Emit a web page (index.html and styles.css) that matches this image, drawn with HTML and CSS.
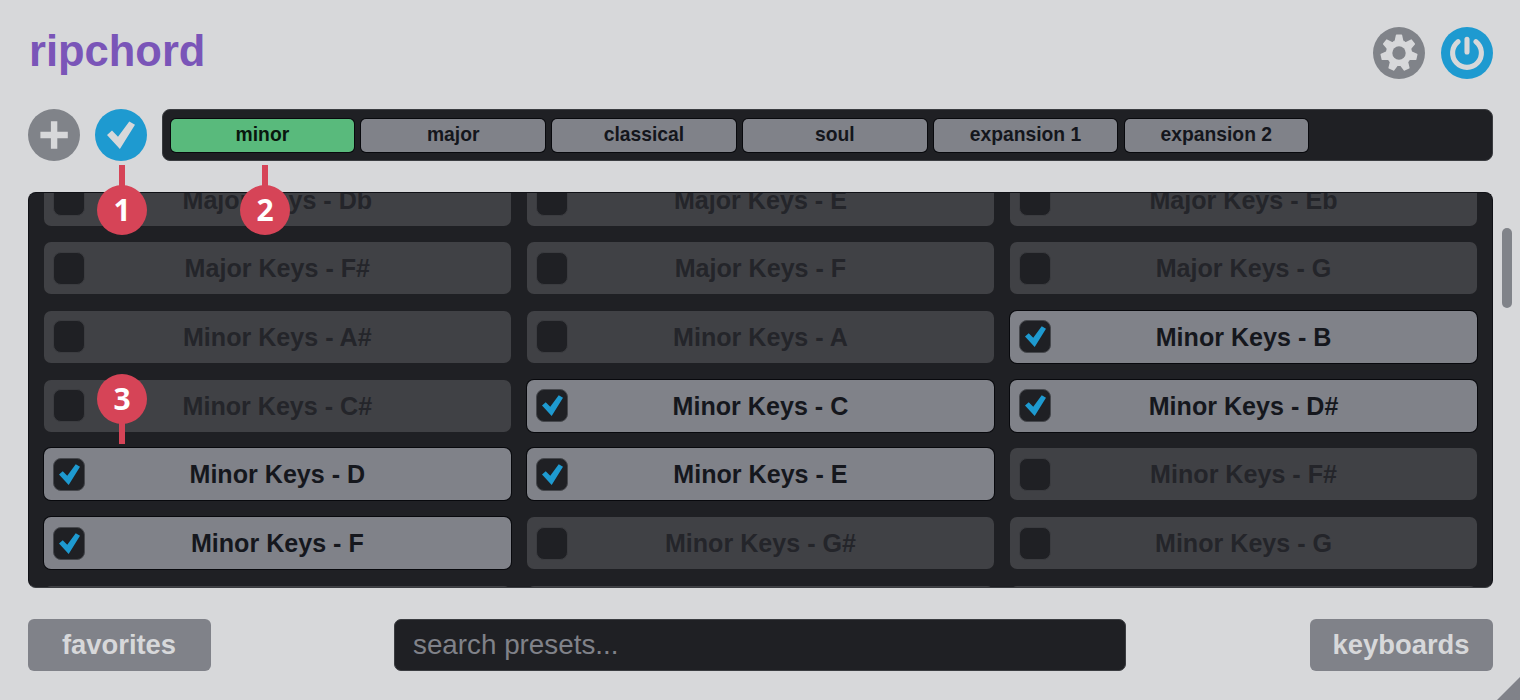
FILE: index.html
```html
<!DOCTYPE html>
<html lang="en">
<head>
<meta charset="utf-8">
<title>ripchord</title>
<link rel="stylesheet" href="styles.css">
</head>
<body>
<svg class="defs" width="0" height="0" aria-hidden="true">
  <symbol id="check" viewBox="0 0 52 52"><path d="M12 26 L17 21.6 L23 27.8 L34.3 12.4 L40 15.8 L24.9 40 Z" fill="currentColor"/></symbol>
</svg>
<div class="app">
  <header class="header">
    <h1 class="logo">ripchord</h1>
    <div class="actions">
      <button class="round" aria-label="Settings">
        <svg viewBox="0 0 52 52">
          <g fill="currentColor" stroke="currentColor" stroke-linejoin="round">
            <circle cx="26" cy="26" r="12.6"/>
            <path id="tooth" d="M22.2 15 L23.6 8.4 H28.4 L29.8 15 Z" stroke-width="1.6"/>
            <use href="#tooth" transform="rotate(51.43 26 26)"/>
            <use href="#tooth" transform="rotate(102.86 26 26)"/>
            <use href="#tooth" transform="rotate(154.29 26 26)"/>
            <use href="#tooth" transform="rotate(205.71 26 26)"/>
            <use href="#tooth" transform="rotate(257.14 26 26)"/>
            <use href="#tooth" transform="rotate(308.57 26 26)"/>
          </g>
          <circle cx="26" cy="26" r="6.7" fill="#808389"/>
        </svg>
      </button>
      <button class="round round-on" aria-label="Power">
        <svg viewBox="0 0 52 52"><path d="M17 14.7 A14.4 14.4 0 1 0 35 14.7 M26 12.2 V25" fill="none" stroke="currentColor" stroke-width="5.1" stroke-linecap="round"/></svg>
      </button>
    </div>
  </header>

  <div class="toolbar">
    <button class="round" aria-label="Add tag">
      <svg viewBox="0 0 52 52"><path d="M12.4 26 H39.8 M26.1 12.3 V39.7" stroke="currentColor" stroke-width="6.4"/></svg>
    </button>
    <button class="round round-on" aria-label="Assign presets"><svg><use href="#check"/></svg></button>
    <nav class="tags">
      <button class="tag tag-on">minor</button>
      <button class="tag">major</button>
      <button class="tag">classical</button>
      <button class="tag">soul</button>
      <button class="tag">expansion 1</button>
      <button class="tag">expansion 2</button>
    </nav>
  </div>

  <main class="browser">
    <div class="presets">
      <div class="preset"><i class="box"></i>Major Keys - Db</div>
      <div class="preset"><i class="box"></i>Major Keys - E</div>
      <div class="preset"><i class="box"></i>Major Keys - Eb</div>
      <div class="preset"><i class="box"></i>Major Keys - F#</div>
      <div class="preset"><i class="box"></i>Major Keys - F</div>
      <div class="preset"><i class="box"></i>Major Keys - G</div>
      <div class="preset"><i class="box"></i>Minor Keys - A#</div>
      <div class="preset"><i class="box"></i>Minor Keys - A</div>
      <div class="preset preset-on"><i class="box"><svg><use href="#check"/></svg></i>Minor Keys - B</div>
      <div class="preset"><i class="box"></i>Minor Keys - C#</div>
      <div class="preset preset-on"><i class="box"><svg><use href="#check"/></svg></i>Minor Keys - C</div>
      <div class="preset preset-on"><i class="box"><svg><use href="#check"/></svg></i>Minor Keys - D#</div>
      <div class="preset preset-on"><i class="box"><svg><use href="#check"/></svg></i>Minor Keys - D</div>
      <div class="preset preset-on"><i class="box"><svg><use href="#check"/></svg></i>Minor Keys - E</div>
      <div class="preset"><i class="box"></i>Minor Keys - F#</div>
      <div class="preset preset-on"><i class="box"><svg><use href="#check"/></svg></i>Minor Keys - F</div>
      <div class="preset"><i class="box"></i>Minor Keys - G#</div>
      <div class="preset"><i class="box"></i>Minor Keys - G</div>
      <div class="preset"></div>
      <div class="preset"></div>
      <div class="preset"></div>
    </div>
  </main>

  <footer class="footer">
    <button class="wide">favorites</button>
    <input class="search" type="text" placeholder="search presets...">
    <button class="wide">keyboards</button>
  </footer>

  <div class="scrollbar"></div>
  <div class="resizer"></div>
  <div class="pin pin-1">1</div>
  <div class="pin pin-2">2</div>
  <div class="pin pin-3">3</div>
</div>
</body>
</html>
```
FILE: styles.css
```css
* { box-sizing: border-box; }
body { margin: 0; background: #d7d8da; font-family: "Liberation Sans", Arial, sans-serif; }
button, input { font: inherit; border: 0; padding: 0; margin: 0; }
.defs { position: absolute; }

.app {
  position: relative;
  width: 1520px;
  height: 700px;
  padding: 26.6px 27.5px 0 27.5px;
  overflow: hidden;
  display: flex;
  flex-direction: column;
}

.header { display: flex; justify-content: space-between; height: 52px; }
.logo { margin: 0; padding-left: 1.5px; font-size: 43.5px; line-height: 49px; font-weight: bold; color: #7a55b8; }
.actions { display: flex; gap: 15.5px; }

.round { flex: none; width: 52px; height: 52px; border-radius: 50%; background: #808389; color: #d7d8da; }
.round svg { display: block; width: 52px; height: 52px; }
.round-on { background: #1e9ad0; }

.toolbar { display: flex; gap: 15.3px; margin-top: 30.4px; height: 52px; }
.tags {
  flex: 1;
  display: flex;
  gap: 7.2px;
  padding: 9px 7.5px 8px;
  background: #1f2024;
  border: 1.5px solid #3b3d41;
  border-radius: 8px;
}
.tag {
  width: 183.6px;
  height: 33px;
  border-radius: 5px;
  background: #808289;
  color: #14161c;
  font-size: 19.3px;
  font-weight: bold;
  line-height: 31px;
  padding-bottom: 2px;
  box-shadow: 0 0 0 1px #08090d;
}
.tag-on { background: #59ba7c; color: #09170e; }

.browser {
  margin-top: 31px;
  height: 396px;
  padding: 0 14px;
  background: #1f2024;
  border: 1.5px solid #101116;
  border-bottom-color: #3b3d41;
  border-radius: 8px;
  overflow: hidden;
}
.presets {
  display: grid;
  grid-template-columns: repeat(3, 467.3px);
  grid-auto-rows: 52px;
  column-gap: 15.8px;
  row-gap: 16.7px;
  margin: -19.4px 0 0 1.2px;
}
.preset {
  display: flex;
  align-items: center;
  justify-content: center;
  position: relative;
  border-radius: 7px;
  background: #404145;
  color: #24252a;
  font-size: 25.1px;
  font-weight: bold;
  line-height: 52px;
}
.preset-on { background: #808289; color: #15171d; box-shadow: 0 0 0 1px #08090d; }
.box {
  position: absolute;
  left: 9.5px;
  top: 9.5px;
  width: 32px;
  height: 33px;
  border: 1.5px solid #3b3c40;
  border-radius: 8px;
  background: #1f2024;
}
.preset-on .box { border-color: #46484d; }
.box svg { position: absolute; left: -4.5px; top: -4px; width: 39px; height: 39px; color: #1e9ad0; }

.footer { display: flex; justify-content: space-between; margin-top: 31px; height: 52px; }
.wide { width: 183px; border-radius: 6px; background: #808289; color: #d7d8da; font-size: 27.4px; font-weight: bold; line-height: 52px; }
.search { width: 732px; padding: 0 18px; border: 1.5px solid #3b3d41; border-radius: 7px; background: #1f2024; font-size: 27.8px; color: #808289; }
.search::placeholder { color: #808289; opacity: 1; }

.scrollbar { position: absolute; left: 1502px; top: 228px; width: 10px; height: 80px; border-radius: 5px; background: #808389; }
.resizer { position: absolute; right: 0; bottom: 0; width: 23px; height: 23px; background: #808289; clip-path: polygon(100% 0, 100% 100%, 0 100%); }

.pin {
  position: absolute;
  width: 50px;
  height: 50px;
  border-radius: 50%;
  background: #d64457;
  color: #fff;
  font: bold 30px/50px "Open Sans", sans-serif;
  text-align: center;
}
.pin::after { content: ""; position: absolute; left: 22px; width: 6px; height: 22px; background: #d64457; }
.pin-1 { left: 97px; top: 185px; }
.pin-2 { left: 240px; top: 185px; }
.pin-3 { left: 97px; top: 374px; }
.pin-1::after, .pin-2::after { top: -20px; }
.pin-3::after { bottom: -20px; }
```
